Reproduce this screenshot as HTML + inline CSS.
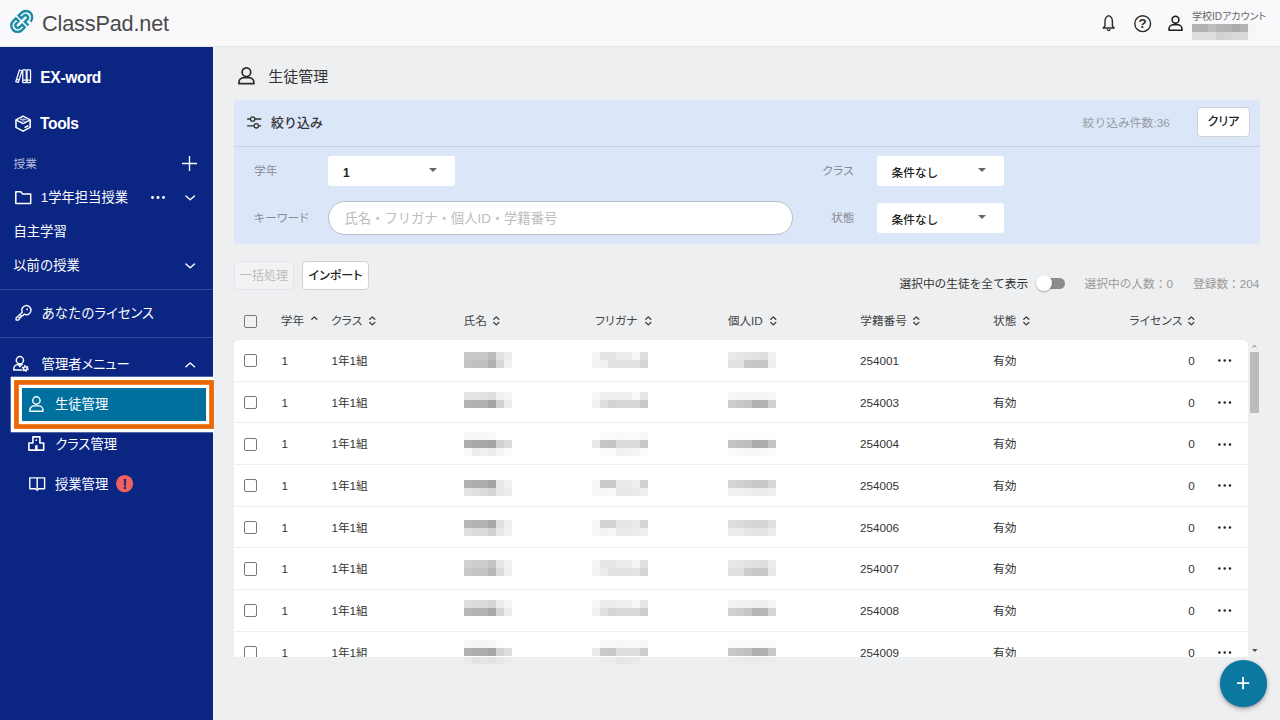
<!DOCTYPE html>
<html lang="ja">
<head>
<meta charset="utf-8">
<title>ClassPad.net - 生徒管理</title>
<style>
*{box-sizing:border-box;margin:0;padding:0}
html,body{width:1280px;height:720px;overflow:hidden}
body{font-family:"Liberation Sans","Noto Sans CJK JP",sans-serif;font-size:11.7px;color:#333;background:#eeeff1;position:relative}
.k{font-feature-settings:"palt"}
.th .k,.lbl .k{letter-spacing:.02em}
.kw .k{font-feature-settings:normal}
svg{display:block;overflow:visible;position:absolute}
header{position:absolute;left:0;top:0;width:1280px;height:47px;background:#f9f9fb;border-bottom:1px solid #e6e6e9;z-index:5}
.logo-tx{position:absolute;left:42px;top:9.5px;font-size:21.7px;line-height:28px;color:#4a4a4a;white-space:nowrap;letter-spacing:-.17px}
.acct{position:absolute;left:1192px;top:9.6px;font-size:10px;line-height:13px;color:#666;white-space:nowrap}
nav{position:absolute;left:0;top:47px;width:213.3px;height:673px;background:#0b2682;color:#fff;z-index:3}
nav ul{list-style:none}
nav li{position:absolute;left:0;width:213px;height:24px;line-height:24px;white-space:nowrap;font-size:13.3px}
nav li>span{position:absolute;top:.8px}
nav li.b{font-weight:bold;font-size:15.6px}
nav li.b>span{top:1px}
nav hr{position:absolute;left:0;width:213px;border:0;border-top:1px solid #2d489c}
.hl{position:absolute;left:0;top:0;width:214px;height:673px;overflow:hidden}
.sel{position:absolute;left:22px;top:340.6px;width:183.8px;height:33.1px;background:#00709f;box-shadow:0 0 0 3.2px #fff,0 0 0 7.9px #eb6604,0 0 0 11.3px #fff}
main{position:absolute;left:0;top:0;width:1280px;height:720px}
.ttl{position:absolute;left:268.3px;top:65.3px;font-size:15px;font-weight:normal;line-height:24px;color:#333;white-space:nowrap}
.filter{position:absolute;left:234.4px;top:100px;width:1025.6px;height:144px;background:#dbe6f9;border-radius:4px}
.filter .hd{position:absolute;left:0;top:0;width:100%;height:47px;border-bottom:1px solid #c6d2e8}
.ftl{position:absolute;left:271px;top:114px;font-size:13px;line-height:18px;font-weight:500;color:#333;white-space:nowrap}
.lbl{position:absolute;font-size:11.7px;line-height:18px;margin-top:.9px;color:#888c94;white-space:nowrap}
.selbox{position:absolute;width:127px;height:30px;background:#fff;border-radius:3px;font-size:11.7px;line-height:30px;color:#222;font-weight:500}
.selbox b{position:absolute;left:15px;top:2px;font-weight:500}
.selbox i{position:absolute;left:101px;top:12px;border:4px solid transparent;border-top:4.5px solid #666;border-bottom:0}
.kw{position:absolute;left:328px;top:201px;width:465px;height:33.5px;border:1px solid #b9bec8;border-radius:17px;background:#fff;font-size:13.3px;line-height:33.5px;color:#bcbcbc;padding-left:15.5px;white-space:nowrap;}
.btn{position:absolute;height:30px;border:1px solid #d2d2d6;border-radius:4px;background:#fff;font-size:12px;line-height:28px;text-align:center;color:#222;font-weight:500;white-space:nowrap}
.btn.dis{background:#f1f2f4;color:#bababa;border-color:#e4e5e8;font-weight:normal}
.meta{position:absolute;font-size:11.7px;line-height:18px;margin-top:.8px;white-space:nowrap;color:#999}
.th{position:absolute;top:311.6px;font-size:11.7px;line-height:18px;color:#444;white-space:nowrap}
.cb{position:absolute;left:244px;width:13.3px;height:13.3px;border:1.4px solid #777;border-radius:2px;background:#fff}
.tbl{position:absolute;left:234px;top:340px;width:1014px;height:317px;background:#fff;overflow:hidden;border-radius:5px 5px 0 0}
.row{position:relative;height:41.66px;border-bottom:1px solid #eeeef0;font-size:11.7px;line-height:18px;color:#333}
.row>span{position:absolute;top:12px;white-space:nowrap}
.row .cb{left:10px;top:14.2px}
.row svg{left:984.4px;top:19.2px}
.mz{position:absolute;height:8px}
.sb{position:absolute;left:1248px;top:340px;width:12px;height:317px}
.sb i{position:absolute;left:2px;top:11.5px;width:8.6px;height:61px;background:#bcbcbc}
.fab{position:absolute;left:1220px;top:660px;width:46.5px;height:46.5px;border-radius:50%;background:#0b78a2;box-shadow:0 2px 5px rgba(0,0,0,.28),0 1px 2px rgba(0,0,0,.2)}
.tg{position:absolute;left:1040px;top:277.5px;width:25px;height:11px;border-radius:6px;background:#8c8c8c}
.tg i{position:absolute;left:-4.5px;top:-2.5px;width:16px;height:16px;border-radius:50%;background:#fff;box-shadow:0 1px 2px rgba(0,0,0,.3)}
</style>
</head>
<body>
<header>
<svg style="left:6px;top:6px" width="32" height="32" viewBox="0 0 32 32" fill="none" stroke="#1b8ba6" stroke-width="2.3" stroke-linejoin="miter"><g transform="translate(15.7 15.45) rotate(-45) scale(1.03)"><path d="M-1.9 -6.1H-5.7A6.1 6.1 0 0 0 -5.7 6.1H-1.9V2.4H-5.3A2.4 2.4 0 0 1 -5.3 -2.4H-1.9Z"/><path d="M5.9 6.1A6.1 6.1 0 0 0 5.7 -6.1H1.9V-2.4H5.3A2.4 2.4 0 0 1 5.3 2.4H1.9V7.4"/></g></svg>
<div class="logo-tx">ClassPad.net</div>
<svg style="left:1101px;top:14px" width="16" height="18" viewBox="0 0 16 18" fill="none" stroke="#2b2b2b" stroke-width="1.4" stroke-linejoin="round" stroke-linecap="round"><path d="M7.7 1.7C5 2.6 4 5 4 7.6V12L2.2 14H13.2L11.4 12V7.6C11.4 5 10.4 2.6 7.7 1.7Z"/><path d="M6.3 15.6A1.5 1.5 0 0 0 9.1 15.6"/></svg>
<svg style="left:1133.6px;top:14.6px" width="17.4" height="17.4" viewBox="0 0 17.4 17.4" fill="none" stroke="#2b2b2b" stroke-width="1.4" stroke-linecap="round"><circle cx="8.7" cy="8.7" r="7.9"/><text x="8.7" y="13.4" font-size="13.4" font-weight="bold" font-family="Liberation Sans,sans-serif" text-anchor="middle" fill="#2b2b2b" stroke="none">?</text></svg>
<svg style="left:1167.6px;top:15px" width="15" height="16" viewBox="0 0 15 16" fill="none" stroke="#1e1e1e" stroke-width="1.6" stroke-linejoin="round"><circle cx="7.5" cy="4.7" r="3.4"/><path d="M1 15.2V14A4.3 4.3 0 0 1 5.3 9.8H9.7A4.3 4.3 0 0 1 14 14V15.2Z"/></svg>
<div class="acct">学校ID<span class="k">アカウント</span></div>
<div class="mz" style="left:1192px;top:24px;width:64px;height:8px;background:linear-gradient(90deg,#b2b2b2 0px 8px,#b0b0b0 8px 16px,#bebebe 16px 24px,#b6b6b6 24px 32px,#b4b4b4 32px 40px,#aaaaaa 40px 48px,#b2b2b2 48px 56px,#f4f4f4 56px 64px)"></div><div class="mz" style="left:1192px;top:32px;width:64px;height:8px;background:linear-gradient(90deg,#dedede 0px 8px,#dedede 8px 16px,#dedede 16px 24px,#d0d0d0 24px 32px,#d4d4d4 32px 40px,#dadada 40px 48px,#dadada 48px 56px,#f8f8f8 56px 64px)"></div>
</header>

<nav>
<ul>
<li class="b" style="top:18px"><svg style="left:15px;top:4px" width="16.5" height="14.6" viewBox="0 0 17 15" fill="none" stroke="#fff" stroke-width="1.3" stroke-linejoin="round"><path d="M4.6 1L7.2 1.8L3.4 13.8L0.8 13Z"/><rect x="8" y=".8" width="3.6" height="13.2" rx=".6"/><rect x="12.4" y=".8" width="3.6" height="13.2" rx=".6"/><path d="M8 11.4H11.6M12.4 11.4H16M1.6 10.6L4.2 11.4"/></svg><span style="left:40.3px;letter-spacing:-.36px">EX-word</span></li>
<li class="b" style="top:64px"><svg style="left:15.1px;top:3.8px" width="16.2" height="17.2" viewBox="0 0 16.4 17" fill="none" stroke="#fff" stroke-width="1.6" stroke-linejoin="round" stroke-linecap="round"><path d="M8.2 .9L15.4 4.7V12.3L8.2 16.1L1 12.3V4.7Z"/><path d="M1.4 5L8.2 8.5L15 5" stroke-width="1.4"/><path d="M5.4 4.6C7.2 3.7 9.2 3.7 11 4.6M7 6C7.8 5.6 8.6 5.6 9.4 6" stroke-width="1"/><path d="M10.4 12.3L13 10.9" stroke-width="1.7"/></svg><span style="left:40px;letter-spacing:-.36px">Tools</span></li>
<li style="top:104px;font-size:11.7px;color:#b4bddb"><span style="left:13.5px">授業</span><svg style="left:182.3px;top:5px" width="15" height="15" viewBox="0 0 15 15" fill="none" stroke="#fff" stroke-width="1.3"><path d="M7.5 0V15M0 7.5H15"/></svg></li>
<li style="top:138.5px"><svg style="left:15px;top:5.5px" width="16.5" height="13.4" viewBox="0 0 16.5 13.4" fill="none" stroke="#fff" stroke-width="1.5" stroke-linejoin="round"><path d="M.8 2.9V12.6H15.7V2.9H7.4L6 .8H.8Z"/></svg><span style="left:40.8px">1学年担当授業</span><svg style="left:151px;top:10.3px" width="14" height="3" viewBox="0 0 14 3" fill="#fff"><circle cx="1.5" cy="1.5" r="1.45"/><circle cx="7" cy="1.5" r="1.45"/><circle cx="12.5" cy="1.5" r="1.45"/></svg><svg style="left:184.6px;top:9px" width="10.4" height="6.2" viewBox="0 0 10.4 6.2" fill="none" stroke="#fff" stroke-width="1.4" stroke-linecap="round" stroke-linejoin="round"><path d="M.9 .9L5.2 4.8L9.5 .9"/></svg></li>
<li style="top:172px"><span style="left:13.5px">自主学習</span></li>
<li style="top:206.5px"><span style="left:13.3px">以前の授業</span><svg style="left:184.6px;top:9.5px" width="10.4" height="6.2" viewBox="0 0 10.4 6.2" fill="none" stroke="#fff" stroke-width="1.4" stroke-linecap="round" stroke-linejoin="round"><path d="M.9 .9L5.2 4.8L9.5 .9"/></svg></li>
<li style="top:254px"><svg style="left:15px;top:4.3px" width="16.5" height="16" viewBox="0 0 16.5 16" fill="none" stroke="#fff" stroke-width="1.4" stroke-linejoin="round" stroke-linecap="round"><path d="M7.3 7.3A4.6 4.6 0 1 1 9.2 9.2L7.6 10.8H5.9V12.5H4.2V14.2L3.3 15.1H1.1V12.9Z"/><circle cx="12.2" cy="4.3" r=".9" fill="#fff" stroke="none"/></svg><span style="left:41.4px">あなたの<span class="k">ライセンス</span></span></li>
<li style="top:305px"><svg style="left:12.6px;top:3.8px" width="16.4" height="16" viewBox="0 0 16.4 16" fill="none" stroke="#fff" stroke-width="1.5" stroke-linejoin="round" stroke-linecap="round"><circle cx="6.9" cy="4.2" r="3.6"/><path d="M8.6 14.1H.8V13A4.4 4.4 0 0 1 5.2 8.6H9.2"/><path d="M5.6 9L6.9 10.8L8.2 9" stroke-width="1.2"/><circle cx="12.3" cy="12.5" r="1.8" stroke-width="1.5"/><circle cx="12.3" cy="12.5" r="2.9" stroke-width="1.2" stroke-dasharray="1.5 1.537" stroke-linecap="butt"/></svg><span style="left:41.6px">管理者<span class="k">メニュー</span></span><svg style="left:184.6px;top:9.6px" width="10.4" height="6.2" viewBox="0 0 10.4 6.2" fill="none" stroke="#fff" stroke-width="1.4" stroke-linecap="round" stroke-linejoin="round"><path d="M.9 4.8L5.2 .9L9.5 4.8"/></svg></li>
</ul>
<hr style="top:242px">
<hr style="top:289.5px">
<div class="hl"><div class="sel"></div></div>
<ul>
<li style="top:345px"><svg style="left:29.2px;top:3.8px" width="14.8" height="16" viewBox="0 0 14.8 16" fill="none" stroke="#fff" stroke-width="1.4" stroke-linejoin="round"><circle cx="7.4" cy="4.5" r="3.7"/><path d="M.8 15.2V14.2A4.3 4.3 0 0 1 5.1 9.9H9.7A4.3 4.3 0 0 1 14 14.2V15.2Z"/></svg><span style="left:55px">生徒管理</span></li>
<li style="top:385px"><svg style="left:28.3px;top:4.3px" width="16.6" height="15" viewBox="0 0 16.6 15" fill="none" stroke="#fff" stroke-width="1.6" stroke-linejoin="round"><path d="M4.9 6.95V.9H11.9V6.95H15.7V14.1H.9V6.95Z"/><circle cx="8.3" cy="4.2" r=".9" fill="#fff" stroke="none"/><rect x="7.1" y="9" width="2.5" height="5.1" rx="1.1" fill="#fff" stroke="none"/></svg><span style="left:55.3px"><span class="k">クラス</span>管理</span></li>
<li style="top:425px"><svg style="left:28.5px;top:5px" width="16.4" height="14.4" viewBox="0 0 16.4 14.4" fill="none" stroke="#fff" stroke-width="1.4" stroke-linejoin="round"><path d="M.8 .9H15.6V11.8H9.6L8.2 13.4L6.8 11.8H.8Z"/><path d="M8.2 .9V11.8"/></svg><span style="left:55px">授業管理</span><svg style="left:116.3px;top:3px" width="17.2" height="17.2" viewBox="0 0 17 17"><circle cx="8.5" cy="8.5" r="8.5" fill="#f0605d"/><text x="8.5" y="13.6" font-size="14.6" font-weight="bold" font-family="Liberation Sans,sans-serif" text-anchor="middle" fill="#0b2682">!</text></svg></li>
</ul>
</nav>

<main>
<svg style="left:237.8px;top:67.2px" width="16.8" height="17.6" viewBox="0 0 16.8 17.6" fill="none" stroke="#2a2a2a" stroke-width="1.7" stroke-linejoin="round"><circle cx="8.4" cy="5.2" r="4.3"/><path d="M.9 16.7V15.4A4.8 4.8 0 0 1 5.7 10.6H11.1A4.8 4.8 0 0 1 15.9 15.4V16.7Z"/></svg>
<h1 class="ttl">生徒管理</h1>
<section class="filter"><div class="hd"></div></section>
<svg style="left:247px;top:115.6px" width="14.4" height="13.4" viewBox="0 0 14.4 13.4" fill="none" stroke="#333" stroke-width="1.3" stroke-linecap="round"><path d="M.6 3H3.3M8 3H13.8M.6 9.8H7M11.7 9.8H13.8"/><circle cx="5.7" cy="3" r="2.2"/><circle cx="9.3" cy="9.8" r="2.2"/></svg>
<div class="ftl">絞り込み</div>
<div class="meta" style="left:1082.6px;top:112.9px;font-size:11.8px;color:#979ba3">絞り込み件数:36</div>
<div class="btn" style="left:1197px;top:107px;width:53px;line-height:29.6px"><span class="k">クリア</span></div>
<div class="lbl" style="left:254px;top:161px">学年</div>
<div class="selbox" style="left:328px;top:156px"><b style="font-weight:bold;font-size:12px">1</b><i></i></div>
<div class="lbl" style="left:822.4px;top:161px"><span class="k">クラス</span></div>
<div class="selbox" style="left:876.5px;top:156px"><b>条件なし</b><i></i></div>
<div class="lbl" style="left:254px;top:208px"><span class="k">キーワード</span></div>
<div class="kw">氏名・<span class="k">フリガナ</span>・個人ID・学籍番号</div>
<div class="lbl" style="left:831px;top:208px">状態</div>
<div class="selbox" style="left:876.5px;top:202.5px"><b>条件なし</b><i></i></div>

<div class="btn dis" style="left:234px;top:260.5px;width:60px;height:29.5px">一括処理</div>
<div class="btn" style="left:302px;top:260.5px;width:67px;height:29.5px"><span class="k">インポート</span></div>
<div class="meta" style="left:899.5px;top:274.3px;color:#333">選択中の生徒を全て表示</div>
<div class="tg"><i></i></div>
<div class="meta" style="left:1084.6px;top:274.3px">選択中の人数：0</div>
<div class="meta" style="left:1193px;top:274.3px">登録数：204</div>

<div class="cb" style="top:315.2px;background:#f2f2f4"></div>
<div class="th" style="left:280.8px">学年</div><svg style="left:311px;top:316.3px" width="6.6" height="9.8" viewBox="0 0 6.6 9.8" fill="none" stroke="#3c3c3c" stroke-width="1.3" stroke-linecap="round" stroke-linejoin="round"><path d="M0.8 3.3L3.3 0.9L5.8 3.3"/></svg>
<div class="th" style="left:331px"><span class="k">クラス</span></div><svg style="left:369.4px;top:316.3px" width="6.6" height="9.8" viewBox="0 0 6.6 9.8" fill="none" stroke="#3c3c3c" stroke-width="1.3" stroke-linecap="round" stroke-linejoin="round"><path d="M0.8 3.3L3.3 0.9L5.8 3.3"/><path d="M0.8 6.5L3.3 8.9L5.8 6.5"/></svg>
<div class="th" style="left:463.5px">氏名</div><svg style="left:493px;top:316.3px" width="6.6" height="9.8" viewBox="0 0 6.6 9.8" fill="none" stroke="#3c3c3c" stroke-width="1.3" stroke-linecap="round" stroke-linejoin="round"><path d="M0.8 3.3L3.3 0.9L5.8 3.3"/><path d="M0.8 6.5L3.3 8.9L5.8 6.5"/></svg>
<div class="th" style="left:595.2px"><span class="k">フリガナ</span></div><svg style="left:644.6px;top:316.3px" width="6.6" height="9.8" viewBox="0 0 6.6 9.8" fill="none" stroke="#3c3c3c" stroke-width="1.3" stroke-linecap="round" stroke-linejoin="round"><path d="M0.8 3.3L3.3 0.9L5.8 3.3"/><path d="M0.8 6.5L3.3 8.9L5.8 6.5"/></svg>
<div class="th" style="left:727.7px">個人ID</div><svg style="left:770px;top:316.3px" width="6.6" height="9.8" viewBox="0 0 6.6 9.8" fill="none" stroke="#3c3c3c" stroke-width="1.3" stroke-linecap="round" stroke-linejoin="round"><path d="M0.8 3.3L3.3 0.9L5.8 3.3"/><path d="M0.8 6.5L3.3 8.9L5.8 6.5"/></svg>
<div class="th" style="left:860.2px">学籍番号</div><svg style="left:913.3px;top:316.3px" width="6.6" height="9.8" viewBox="0 0 6.6 9.8" fill="none" stroke="#3c3c3c" stroke-width="1.3" stroke-linecap="round" stroke-linejoin="round"><path d="M0.8 3.3L3.3 0.9L5.8 3.3"/><path d="M0.8 6.5L3.3 8.9L5.8 6.5"/></svg>
<div class="th" style="left:993px">状態</div><svg style="left:1023px;top:316.3px" width="6.6" height="9.8" viewBox="0 0 6.6 9.8" fill="none" stroke="#3c3c3c" stroke-width="1.3" stroke-linecap="round" stroke-linejoin="round"><path d="M0.8 3.3L3.3 0.9L5.8 3.3"/><path d="M0.8 6.5L3.3 8.9L5.8 6.5"/></svg>
<div class="th" style="left:1129.3px"><span class="k">ライセンス</span></div><svg style="left:1188.4px;top:316.3px" width="6.6" height="9.8" viewBox="0 0 6.6 9.8" fill="none" stroke="#3c3c3c" stroke-width="1.3" stroke-linecap="round" stroke-linejoin="round"><path d="M0.8 3.3L3.3 0.9L5.8 3.3"/><path d="M0.8 6.5L3.3 8.9L5.8 6.5"/></svg>

<div class="tbl">
<div class="row"><div class="cb"></div><span style="left:47.4px">1</span><span style="left:97.4px">1年1組</span><span style="left:626px">254001</span><span style="left:759px">有効</span><span style="left:954.3px">0</span><svg width="13.4" height="3" viewBox="0 0 13.4 3" fill="#222"><circle cx="1.4" cy="1.5" r="1.25"/><circle cx="6.7" cy="1.5" r="1.25"/><circle cx="12" cy="1.5" r="1.25"/></svg></div>
<div class="row"><div class="cb"></div><span style="left:47.4px">1</span><span style="left:97.4px">1年1組</span><span style="left:626px">254003</span><span style="left:759px">有効</span><span style="left:954.3px">0</span><svg width="13.4" height="3" viewBox="0 0 13.4 3" fill="#222"><circle cx="1.4" cy="1.5" r="1.25"/><circle cx="6.7" cy="1.5" r="1.25"/><circle cx="12" cy="1.5" r="1.25"/></svg></div>
<div class="row"><div class="cb"></div><span style="left:47.4px">1</span><span style="left:97.4px">1年1組</span><span style="left:626px">254004</span><span style="left:759px">有効</span><span style="left:954.3px">0</span><svg width="13.4" height="3" viewBox="0 0 13.4 3" fill="#222"><circle cx="1.4" cy="1.5" r="1.25"/><circle cx="6.7" cy="1.5" r="1.25"/><circle cx="12" cy="1.5" r="1.25"/></svg></div>
<div class="row"><div class="cb"></div><span style="left:47.4px">1</span><span style="left:97.4px">1年1組</span><span style="left:626px">254005</span><span style="left:759px">有効</span><span style="left:954.3px">0</span><svg width="13.4" height="3" viewBox="0 0 13.4 3" fill="#222"><circle cx="1.4" cy="1.5" r="1.25"/><circle cx="6.7" cy="1.5" r="1.25"/><circle cx="12" cy="1.5" r="1.25"/></svg></div>
<div class="row"><div class="cb"></div><span style="left:47.4px">1</span><span style="left:97.4px">1年1組</span><span style="left:626px">254006</span><span style="left:759px">有効</span><span style="left:954.3px">0</span><svg width="13.4" height="3" viewBox="0 0 13.4 3" fill="#222"><circle cx="1.4" cy="1.5" r="1.25"/><circle cx="6.7" cy="1.5" r="1.25"/><circle cx="12" cy="1.5" r="1.25"/></svg></div>
<div class="row"><div class="cb"></div><span style="left:47.4px">1</span><span style="left:97.4px">1年1組</span><span style="left:626px">254007</span><span style="left:759px">有効</span><span style="left:954.3px">0</span><svg width="13.4" height="3" viewBox="0 0 13.4 3" fill="#222"><circle cx="1.4" cy="1.5" r="1.25"/><circle cx="6.7" cy="1.5" r="1.25"/><circle cx="12" cy="1.5" r="1.25"/></svg></div>
<div class="row"><div class="cb"></div><span style="left:47.4px">1</span><span style="left:97.4px">1年1組</span><span style="left:626px">254008</span><span style="left:759px">有効</span><span style="left:954.3px">0</span><svg width="13.4" height="3" viewBox="0 0 13.4 3" fill="#222"><circle cx="1.4" cy="1.5" r="1.25"/><circle cx="6.7" cy="1.5" r="1.25"/><circle cx="12" cy="1.5" r="1.25"/></svg></div>
<div class="row"><div class="cb"></div><span style="left:47.4px">1</span><span style="left:97.4px">1年1組</span><span style="left:626px">254009</span><span style="left:759px">有効</span><span style="left:954.3px">0</span><svg width="13.4" height="3" viewBox="0 0 13.4 3" fill="#222"><circle cx="1.4" cy="1.5" r="1.25"/><circle cx="6.7" cy="1.5" r="1.25"/><circle cx="12" cy="1.5" r="1.25"/></svg></div>
</div>
<div class="mz" style="left:464px;top:352px;width:48px;height:8px;background:linear-gradient(90deg,#c8c8c8 0px 8px,#c8c8c8 8px 16px,#c8c8c8 16px 24px,#bcbcbc 24px 32px,#e2e2e2 32px 40px,#ececec 40px 48px)"></div><div class="mz" style="left:464px;top:360px;width:48px;height:8px;background:linear-gradient(90deg,#c4c4c4 0px 8px,#c0c0c0 8px 16px,#c0c0c0 16px 24px,#b0b0b0 24px 32px,#d8d8d8 32px 40px,#f0f0f0 40px 48px)"></div><div class="mz" style="left:592px;top:352px;width:56px;height:8px;background:linear-gradient(90deg,#f4f4f4 0px 8px,#e4e4e4 8px 16px,#e4e4e4 16px 24px,#ececec 24px 32px,#ececec 32px 40px,#f6f6f6 40px 48px,#dedede 48px 56px)"></div><div class="mz" style="left:592px;top:360px;width:56px;height:8px;background:linear-gradient(90deg,#f2f2f2 0px 8px,#f0f0f0 8px 16px,#e2e2e2 16px 24px,#e2e2e2 24px 32px,#e2e2e2 32px 40px,#e2e2e2 40px 48px,#d4d4d4 48px 56px)"></div><div class="mz" style="left:728px;top:352px;width:48px;height:8px;background:linear-gradient(90deg,#eaeaea 0px 8px,#e6e6e6 8px 16px,#e4e4e4 16px 24px,#e2e2e2 24px 32px,#dedede 32px 40px,#f0f0f0 40px 48px)"></div><div class="mz" style="left:728px;top:360px;width:48px;height:8px;background:linear-gradient(90deg,#e2e2e2 0px 8px,#e2e2e2 8px 16px,#c8c8c8 16px 24px,#c6c6c6 24px 32px,#c6c6c6 32px 40px,#eeeeee 40px 48px)"></div><div class="mz" style="left:464px;top:392px;width:48px;height:8px;background:linear-gradient(90deg,#e4e4e4 0px 8px,#e4e4e4 8px 16px,#e2e2e2 16px 24px,#dedede 24px 32px,#f0f0f0 32px 40px,#f4f4f4 40px 48px)"></div><div class="mz" style="left:464px;top:400px;width:48px;height:8px;background:linear-gradient(90deg,#b4b4b4 0px 8px,#b0b0b0 8px 16px,#b0b0b0 16px 24px,#a4a4a4 24px 32px,#d0d0d0 32px 40px,#ececec 40px 48px)"></div><div class="mz" style="left:592px;top:392px;width:56px;height:8px;background:linear-gradient(90deg,#f6f6f6 0px 8px,#eeeeee 8px 16px,#eeeeee 16px 24px,#eeeeee 24px 32px,#eeeeee 32px 40px,#fafafa 40px 48px,#e6e6e6 48px 56px)"></div><div class="mz" style="left:592px;top:400px;width:56px;height:8px;background:linear-gradient(90deg,#f0f0f0 0px 8px,#dedede 8px 16px,#d2d2d2 16px 24px,#d8d8d8 24px 32px,#d8d8d8 32px 40px,#d8d8d8 40px 48px,#c8c8c8 48px 56px)"></div><div class="mz" style="left:728px;top:392px;width:48px;height:8px;background:linear-gradient(90deg,#f6f6f6 0px 8px,#f4f4f4 8px 16px,#f4f4f4 16px 24px,#f4f4f4 24px 32px,#f4f4f4 32px 40px,#f6f6f6 40px 48px)"></div><div class="mz" style="left:728px;top:400px;width:48px;height:8px;background:linear-gradient(90deg,#cccccc 0px 8px,#c8c8c8 8px 16px,#c4c4c4 16px 24px,#b0b0b0 24px 32px,#b2b2b2 32px 40px,#d0d0d0 40px 48px)"></div><div class="mz" style="left:464px;top:432px;width:48px;height:8px;background:linear-gradient(90deg,#f8f8f8 0px 8px,#f6f6f6 8px 16px,#f6f6f6 16px 24px,#fafafa 24px 32px,#ffffff 32px 40px,#ffffff 40px 48px)"></div><div class="mz" style="left:464px;top:440px;width:48px;height:8px;background:linear-gradient(90deg,#acacac 0px 8px,#a8a8a8 8px 16px,#a8a8a8 16px 24px,#a4a4a4 24px 32px,#d0d0d0 32px 40px,#dcdcdc 40px 48px)"></div><div class="mz" style="left:464px;top:448px;width:48px;height:8px;background:linear-gradient(90deg,#fafafa 0px 8px,#ececec 8px 16px,#f0f0f0 16px 24px,#ececec 24px 32px,#f4f4f4 32px 40px,#fcfcfc 40px 48px)"></div><div class="mz" style="left:592px;top:432px;width:56px;height:8px;background:linear-gradient(90deg,#ffffff 0px 8px,#fcfcfc 8px 16px,#fcfcfc 16px 24px,#fafafa 24px 32px,#fcfcfc 32px 40px,#fcfcfc 40px 48px,#f8f8f8 48px 56px)"></div><div class="mz" style="left:592px;top:440px;width:56px;height:8px;background:linear-gradient(90deg,#e8e8e8 0px 8px,#c6c6c6 8px 16px,#c4c4c4 16px 24px,#dcdcdc 24px 32px,#dcdcdc 32px 40px,#dcdcdc 40px 48px,#c8c8c8 48px 56px)"></div><div class="mz" style="left:592px;top:448px;width:56px;height:8px;background:linear-gradient(90deg,#ffffff 0px 8px,#fcfcfc 8px 16px,#fcfcfc 16px 24px,#f0f0f0 24px 32px,#f2f2f2 32px 40px,#f4f4f4 40px 48px,#fcfcfc 48px 56px)"></div><div class="mz" style="left:728px;top:432px;width:48px;height:8px;background:linear-gradient(90deg,#fefefe 0px 8px,#fefefe 8px 16px,#fefefe 16px 24px,#fefefe 24px 32px,#fefefe 32px 40px,#fefefe 40px 48px)"></div><div class="mz" style="left:728px;top:440px;width:48px;height:8px;background:linear-gradient(90deg,#c4c4c4 0px 8px,#c0c0c0 8px 16px,#bebebe 16px 24px,#aaaaaa 24px 32px,#acacac 32px 40px,#c4c4c4 40px 48px)"></div><div class="mz" style="left:728px;top:448px;width:48px;height:8px;background:linear-gradient(90deg,#fcfcfc 0px 8px,#fafafa 8px 16px,#f8f8f8 16px 24px,#f8f8f8 24px 32px,#fafafa 32px 40px,#fcfcfc 40px 48px)"></div><div class="mz" style="left:464px;top:480px;width:48px;height:8px;background:linear-gradient(90deg,#b0b0b0 0px 8px,#acacac 8px 16px,#acacac 16px 24px,#a4a4a4 24px 32px,#e8e8e8 32px 40px,#f0f0f0 40px 48px)"></div><div class="mz" style="left:464px;top:488px;width:48px;height:8px;background:linear-gradient(90deg,#e4e4e4 0px 8px,#e0e0e0 8px 16px,#dcdcdc 16px 24px,#d4d4d4 24px 32px,#e8e8e8 32px 40px,#ececec 40px 48px)"></div><div class="mz" style="left:592px;top:480px;width:56px;height:8px;background:linear-gradient(90deg,#f6f6f6 0px 8px,#cacaca 8px 16px,#cacaca 16px 24px,#eaeaea 24px 32px,#eaeaea 32px 40px,#eeeeee 40px 48px,#d0d0d0 48px 56px)"></div><div class="mz" style="left:592px;top:488px;width:56px;height:8px;background:linear-gradient(90deg,#f6f6f6 0px 8px,#f6f6f6 8px 16px,#fafafa 16px 24px,#e8e8e8 24px 32px,#e8e8e8 32px 40px,#eaeaea 40px 48px,#eeeeee 48px 56px)"></div><div class="mz" style="left:728px;top:480px;width:48px;height:8px;background:linear-gradient(90deg,#d4d4d4 0px 8px,#d0d0d0 8px 16px,#cccccc 16px 24px,#c8c8c8 24px 32px,#c8c8c8 32px 40px,#d8d8d8 40px 48px)"></div><div class="mz" style="left:728px;top:488px;width:48px;height:8px;background:linear-gradient(90deg,#f0f0f0 0px 8px,#f0f0f0 8px 16px,#eeeeee 16px 24px,#ececec 24px 32px,#ececec 32px 40px,#eeeeee 40px 48px)"></div><div class="mz" style="left:464px;top:520px;width:48px;height:8px;background:linear-gradient(90deg,#b8b8b8 0px 8px,#b4b4b4 8px 16px,#b4b4b4 16px 24px,#a8a8a8 24px 32px,#e0e0e0 32px 40px,#eeeeee 40px 48px)"></div><div class="mz" style="left:464px;top:528px;width:48px;height:8px;background:linear-gradient(90deg,#e0e0e0 0px 8px,#dcdcdc 8px 16px,#dcdcdc 16px 24px,#d0d0d0 24px 32px,#e8e8e8 32px 40px,#f0f0f0 40px 48px)"></div><div class="mz" style="left:592px;top:520px;width:56px;height:8px;background:linear-gradient(90deg,#f6f6f6 0px 8px,#d2d2d2 8px 16px,#d2d2d2 16px 24px,#e6e6e6 24px 32px,#e6e6e6 32px 40px,#eaeaea 40px 48px,#d4d4d4 48px 56px)"></div><div class="mz" style="left:592px;top:528px;width:56px;height:8px;background:linear-gradient(90deg,#f6f6f6 0px 8px,#f2f2f2 8px 16px,#f6f6f6 16px 24px,#eaeaea 24px 32px,#eaeaea 32px 40px,#ececec 40px 48px,#eeeeee 48px 56px)"></div><div class="mz" style="left:728px;top:520px;width:48px;height:8px;background:linear-gradient(90deg,#dedede 0px 8px,#dcdcdc 8px 16px,#d8d8d8 16px 24px,#d6d6d6 24px 32px,#d6d6d6 32px 40px,#e0e0e0 40px 48px)"></div><div class="mz" style="left:728px;top:528px;width:48px;height:8px;background:linear-gradient(90deg,#ececec 0px 8px,#ececec 8px 16px,#e6e6e6 16px 24px,#e4e4e4 24px 32px,#e4e4e4 32px 40px,#ececec 40px 48px)"></div><div class="mz" style="left:464px;top:560px;width:48px;height:8px;background:linear-gradient(90deg,#d0d0d0 0px 8px,#cccccc 8px 16px,#cccccc 16px 24px,#c4c4c4 24px 32px,#e6e6e6 32px 40px,#f0f0f0 40px 48px)"></div><div class="mz" style="left:464px;top:568px;width:48px;height:8px;background:linear-gradient(90deg,#c8c8c8 0px 8px,#c4c4c4 8px 16px,#c4c4c4 16px 24px,#b8b8b8 24px 32px,#dcdcdc 32px 40px,#eeeeee 40px 48px)"></div><div class="mz" style="left:592px;top:560px;width:56px;height:8px;background:linear-gradient(90deg,#f4f4f4 0px 8px,#e6e6e6 8px 16px,#e6e6e6 16px 24px,#ececec 24px 32px,#ececec 32px 40px,#f4f4f4 40px 48px,#e0e0e0 48px 56px)"></div><div class="mz" style="left:592px;top:568px;width:56px;height:8px;background:linear-gradient(90deg,#f2f2f2 0px 8px,#ececec 8px 16px,#e2e2e2 16px 24px,#e2e2e2 24px 32px,#e2e2e2 32px 40px,#e4e4e4 40px 48px,#d4d4d4 48px 56px)"></div><div class="mz" style="left:728px;top:560px;width:48px;height:8px;background:linear-gradient(90deg,#e8e8e8 0px 8px,#e6e6e6 8px 16px,#e2e2e2 16px 24px,#e0e0e0 24px 32px,#dedede 32px 40px,#ececec 40px 48px)"></div><div class="mz" style="left:728px;top:568px;width:48px;height:8px;background:linear-gradient(90deg,#e0e0e0 0px 8px,#e0e0e0 8px 16px,#cccccc 16px 24px,#c8c8c8 24px 32px,#c8c8c8 32px 40px,#e8e8e8 40px 48px)"></div><div class="mz" style="left:464px;top:600px;width:48px;height:8px;background:linear-gradient(90deg,#dedede 0px 8px,#dcdcdc 8px 16px,#dcdcdc 16px 24px,#d4d4d4 24px 32px,#ececec 32px 40px,#f4f4f4 40px 48px)"></div><div class="mz" style="left:464px;top:608px;width:48px;height:8px;background:linear-gradient(90deg,#b8b8b8 0px 8px,#b4b4b4 8px 16px,#b4b4b4 16px 24px,#a8a8a8 24px 32px,#d4d4d4 32px 40px,#ececec 40px 48px)"></div><div class="mz" style="left:592px;top:600px;width:56px;height:8px;background:linear-gradient(90deg,#f6f6f6 0px 8px,#ececec 8px 16px,#ececec 16px 24px,#eeeeee 24px 32px,#eeeeee 32px 40px,#f8f8f8 40px 48px,#e6e6e6 48px 56px)"></div><div class="mz" style="left:592px;top:608px;width:56px;height:8px;background:linear-gradient(90deg,#f0f0f0 0px 8px,#e0e0e0 8px 16px,#d6d6d6 16px 24px,#dadada 24px 32px,#dadada 32px 40px,#dadada 40px 48px,#cccccc 48px 56px)"></div><div class="mz" style="left:728px;top:600px;width:48px;height:8px;background:linear-gradient(90deg,#f2f2f2 0px 8px,#f0f0f0 8px 16px,#f0f0f0 16px 24px,#eeeeee 24px 32px,#eeeeee 32px 40px,#f4f4f4 40px 48px)"></div><div class="mz" style="left:728px;top:608px;width:48px;height:8px;background:linear-gradient(90deg,#d0d0d0 0px 8px,#cccccc 8px 16px,#c6c6c6 16px 24px,#b6b6b6 24px 32px,#b8b8b8 32px 40px,#d4d4d4 40px 48px)"></div><div class="mz" style="left:464px;top:640px;width:48px;height:8px;background:linear-gradient(90deg,#f6f6f6 0px 8px,#f4f4f4 8px 16px,#f4f4f4 16px 24px,#f8f8f8 24px 32px,#fefefe 32px 40px,#ffffff 40px 48px)"></div><div class="mz" style="left:464px;top:648px;width:48px;height:8px;background:linear-gradient(90deg,#b0b0b0 0px 8px,#acacac 8px 16px,#acacac 16px 24px,#a6a6a6 24px 32px,#d2d2d2 32px 40px,#dedede 40px 48px)"></div><div class="mz" style="left:592px;top:640px;width:56px;height:8px;background:linear-gradient(90deg,#ffffff 0px 8px,#fafafa 8px 16px,#fafafa 16px 24px,#f8f8f8 24px 32px,#fafafa 32px 40px,#fafafa 40px 48px,#f6f6f6 48px 56px)"></div><div class="mz" style="left:592px;top:648px;width:56px;height:8px;background:linear-gradient(90deg,#eaeaea 0px 8px,#cacaca 8px 16px,#c8c8c8 16px 24px,#dedede 24px 32px,#dedede 32px 40px,#dedede 40px 48px,#cccccc 48px 56px)"></div><div class="mz" style="left:728px;top:640px;width:48px;height:8px;background:linear-gradient(90deg,#fcfcfc 0px 8px,#fcfcfc 8px 16px,#fcfcfc 16px 24px,#fcfcfc 24px 32px,#fcfcfc 32px 40px,#fcfcfc 40px 48px)"></div><div class="mz" style="left:728px;top:648px;width:48px;height:8px;background:linear-gradient(90deg,#c8c8c8 0px 8px,#c4c4c4 8px 16px,#c0c0c0 16px 24px,#aeaeae 24px 32px,#b0b0b0 32px 40px,#c8c8c8 40px 48px)"></div><div class="mz" style="left:464px;top:657px;width:48px;height:7px;background:linear-gradient(90deg,#eaeaea 0px 8px,#e2e2e2 8px 16px,#e4e4e4 16px 24px,#e2e2e2 24px 32px,#e8e8e8 32px 40px,#ececec 40px 48px)"></div><div class="mz" style="left:592px;top:657px;width:56px;height:7px;background:linear-gradient(90deg,#eeeeee 0px 8px,#ececec 8px 16px,#ececec 16px 24px,#e6e6e6 24px 32px,#e8e8e8 32px 40px,#eaeaea 40px 48px,#eeeeee 48px 56px)"></div><div class="mz" style="left:728px;top:657px;width:48px;height:7px;background:linear-gradient(90deg,#ececec 0px 8px,#ebebeb 8px 16px,#eaeaea 16px 24px,#eaeaea 24px 32px,#ebebeb 32px 40px,#ececec 40px 48px)"></div>
<div class="sb"><svg style="left:4px;top:5.2px" width="4.8" height="2.6" viewBox="0 0 4.8 2.6" fill="none" stroke="#666" stroke-width=".9"><path d="M.4 2.3L2.4 .5L4.4 2.3"/></svg><i></i><svg style="left:3.5px;top:309px" width="5.6" height="3" viewBox="0 0 5.6 3" fill="#505050"><path d="M0 0H5.6L2.8 3Z"/></svg></div>
<div class="fab"><svg style="left:17.2px;top:17.2px" width="12.2" height="12.2" viewBox="0 0 12.2 12.2" fill="none" stroke="#fff" stroke-width="1.8"><path d="M6.1 0V12.2M0 6.1H12.2"/></svg></div>
</main>
</body>
</html>
